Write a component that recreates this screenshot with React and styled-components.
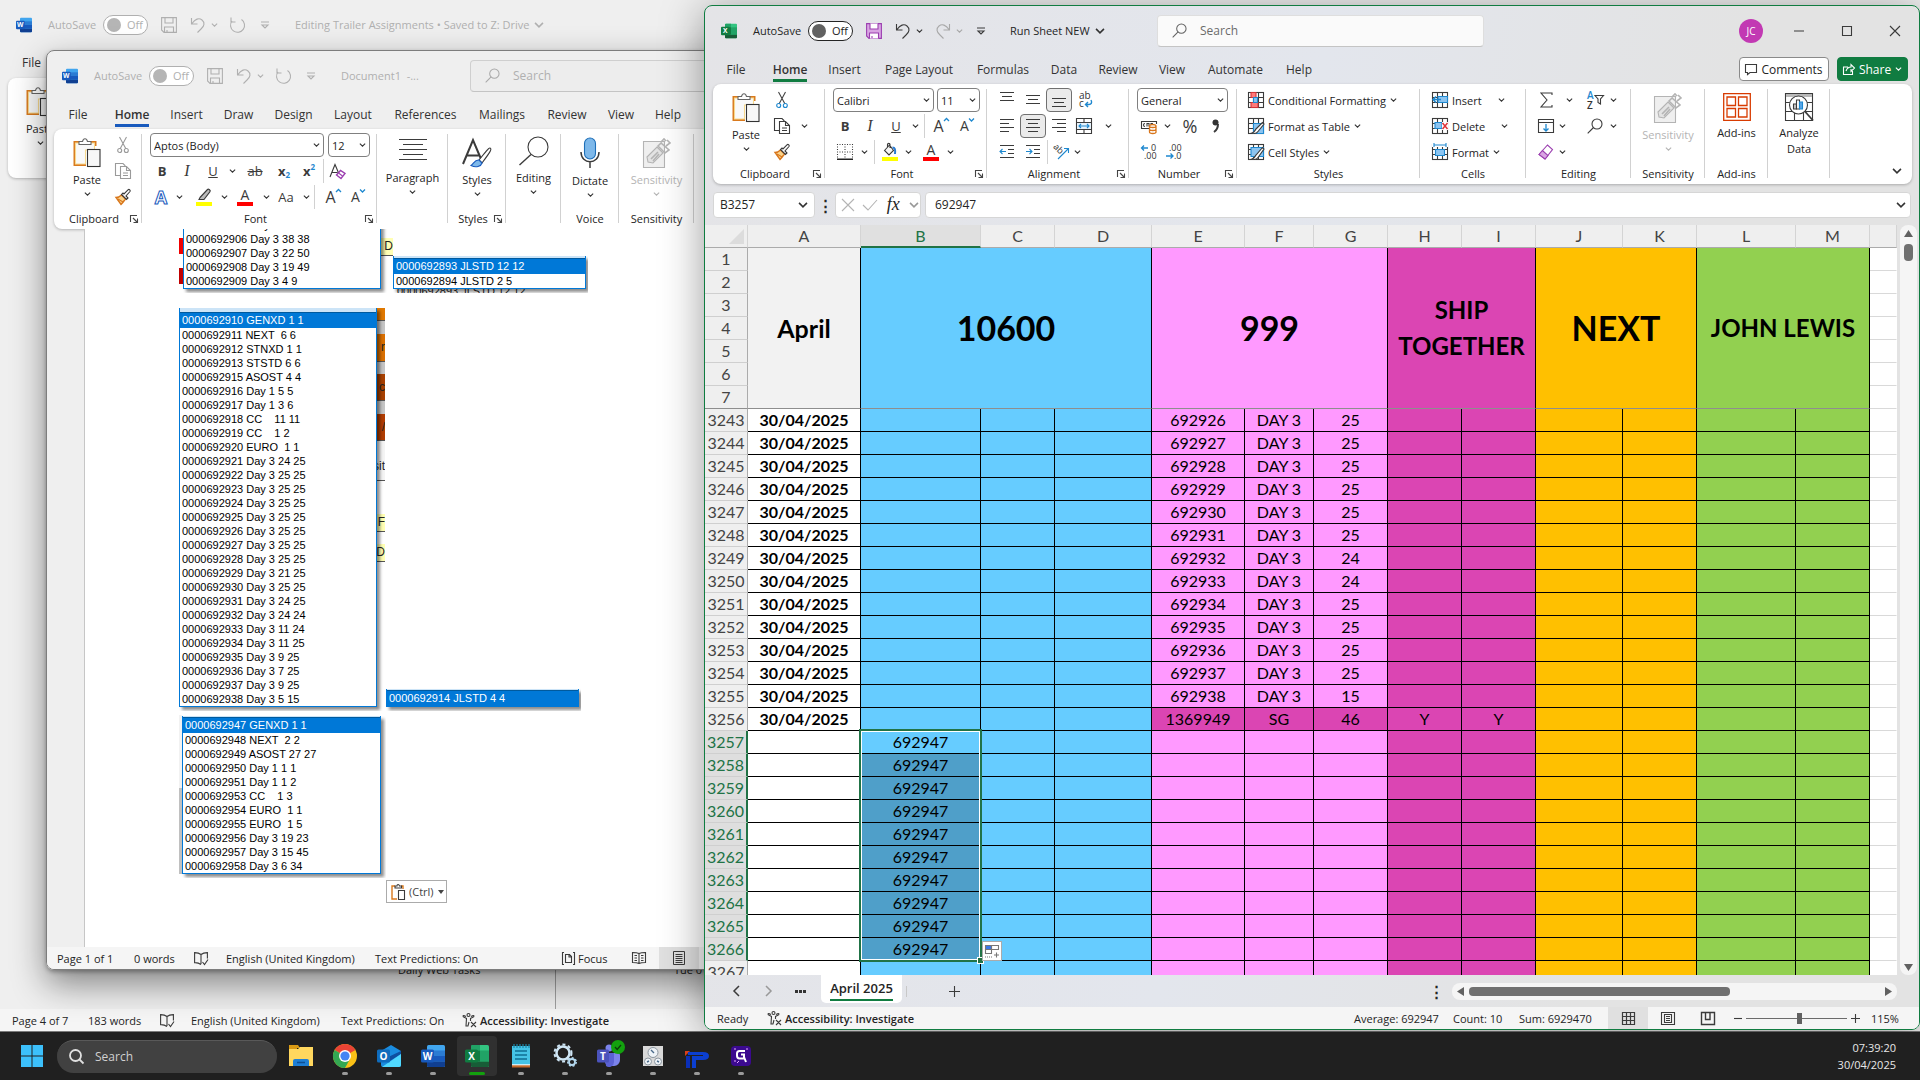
import React, { useState } from 'react';
import styled, { createGlobalStyle, css } from 'styled-components';

const GlobalStyle = createGlobalStyle`
  * {
    box-sizing: border-box;
  }

  body {
    margin: 0;
    font-family: 'Open Sans', 'Noto Sans', sans-serif;
    font-size: 11px;
    color: #242424;
    background: #202020;
    overflow: hidden;
  }

  button,
  input,
  select {
    font: inherit;
    color: inherit;
    margin: 0;
    padding: 0;
    border: 0;
    background: none;
    outline: none;
  }

  svg {
    display: block;
    flex-shrink: 0;
    overflow: visible;
  }
`;

/* ---------- icons ---------- */

const blue = '#1e88cf';

const Svg = ({ w = 16, h = 16, box, color = '#3b3b3b', children }) => (
  <svg
    width={w}
    height={h}
    viewBox={box || `0 0 ${w} ${h}`}
    fill="none"
    stroke={color}
    strokeWidth="1.1"
    aria-hidden="true"
  >
    {children}
  </svg>
);

const Chevron = ({ color = '#333', w = 7 }) => (
  <Svg w={w} h={w === 7 ? 4 : 6} box="0 0 8 5" color={color}>
    <path d="M.7.7 4 4 7.3.7" strokeWidth="1.3" />
  </Svg>
);

const OfficeLogo = ({ letter, size = 16, tones, split }) => (
  <Svg w={size} h={size} box="0 0 24 24">
    <g stroke="none">
      <rect x="6" y="1" width="18" height="22" rx="1.5" fill={tones[0]} />
      <rect x="6" y="6.5" width="18" height="5.5" fill={tones[1]} />
      <rect x="6" y="12" width="18" height="5.5" fill={tones[2]} />
      <path d="M6 17.500h18V21.500a1.500 1.500 0 0 1-1.500 1.500H7.500A1.500 1.500 0 0 1 6 21.500z" fill={tones[3]} />
      {split && <path d="M15 1H7.500Q6 1 6 2.500v4h9zM15 12v5.500h9V12z" fill={tones[1]} />}
      {split && <path d="M6 6.500h9V12H6z" fill={tones[2]} />}
      <rect x="0" y="5.500" width="13" height="13" rx="1.500" fill={tones[4]} />
      <text
        x="6.500"
        y="15.600"
        fontSize="10"
        fontWeight="700"
        textAnchor="middle"
        fill="#fff"
      >
        {letter}
      </text>
    </g>
  </Svg>
);

const WordLogo = ({ size }) => (
  <OfficeLogo letter="W" size={size} tones={['#41a5ee', '#2b7cd3', '#185abd', '#103f91', '#185abd']} />
);

const ExcelLogo = ({ size }) => (
  <OfficeLogo letter="X" size={size} split tones={['#33c481', '#21a366', '#107c41', '#185c37', '#107c41']} />
);

const Lines = ({ rows, y = 0, gap = 4 }) => (
  <path d={rows.map(([x1, x2], i) => `M${x1} ${y + i * gap + 0.5}H${x2}`).join('')} />
);

const Table16 = ({ children }) => (
  <Svg>
    <rect x=".5" y=".5" width="15" height="15" fill="#fff" />
    <path d="M.5 5.500h15M.5 10.500h15M5.500.5v15M10.500.5v15" />
    {children}
  </Svg>
);

const icons = {
  save: ({ color, fill = 'none' }) => (
    <Svg color={color}>
      <path d="M.6.6h14.800v14.800H3L.6 13z" fill={fill} />
      <path d="M4 .6v5.400h8V.6M3.500 15.400V10h9v5.400M6 13v2" fill={fill === 'none' ? 'none' : '#fff'} />
    </Svg>
  ),
  undo: ({ color }) => (
    <Svg color={color}>
      <path d="M1.500 1v6h6M2 6.500C5 2 9 .5 12 3s2.500 6-1 9l-3.500 3.500" />
    </Svg>
  ),
  redo: ({ color }) => (
    <Svg color={color}>
      <path d="M14.500 1v6h-6M14 6.500C11 2 7 .5 4 3s-2.500 6 1 9l3.500 3.500" />
    </Svg>
  ),
  repeat: ({ color }) => (
    <Svg color={color}>
      <path d="M2 .5v4.500h4.500M12.500 2.500A7 7 0 1 1 3 4" />
    </Svg>
  ),
  customise: ({ color }) => (
    <Svg w={8} h={8} color={color}>
      <path d="M0 1h8M1 4l3 3 3-3z" />
    </Svg>
  ),
  search: ({ color, w = 15 }) => (
    <Svg w={w} h={w} box="0 0 16 16" color={color}>
      <circle cx="10" cy="6" r="5" />
      <path d="M6.500 9.500.7 15.300" />
    </Svg>
  ),
  paste: () => (
    <Svg w={28} h={30}>
      <path d="M6 4H1.500v23H13M18 4h4.500v4" stroke="#d97a1e" strokeWidth="2" fill="#fbe3a8" />
      <path d="M2.500 5h19v7h-9v14h-10z" fill="#f9f9f9" stroke="#f7d98f" />
      <path d="M6 6.500V3.500h3.500C10 1.500 11 .7 12 .7s2 .8 2.500 2.800H18v3z" fill="#fff" stroke="#666" />
      <rect x="14.500" y="11.500" width="12.500" height="17" fill="#f7f7f7" stroke="#333" />
    </Svg>
  ),
  cut: ({ off }) => (
    <Svg w={12} h={16} color={off ? '#9a9a9a' : '#444'}>
      <path d="M2.500 0 9 12M9.500 0 3 12" />
      <circle cx="2.700" cy="13.500" r="2" stroke={off ? '#9a9a9a' : blue} />
      <circle cx="9.300" cy="13.500" r="2" stroke={off ? '#9a9a9a' : blue} />
    </Svg>
  ),
  copy: ({ off }) => (
    <Svg color={off ? '#9a9a9a' : '#3b3b3b'}>
      <path d="M5 12.500H.5V.5H8l2 2V4" />
      <path d="M5.500 3.500h6l4 4v8h-10zM11.500 3.500v4h4M8 10h5M8 12.500h5" fill="#fff" />
    </Svg>
  ),
  brush: () => (
    <Svg>
      <path d="M1 8.500c2 0 4-1 5.500-2.500L10.500 10C9 12 7.500 14 6 15.500z" fill="#fbd38a" stroke="#d8761c" strokeWidth="1.400" />
      <path d="m3 10 5 3" stroke="#d8761c" />
      <path d="m6.500 5.500 5 5 1.500-1.500-2-2 4-4.500c.8-1-.8-2.600-1.800-1.800L9 5 8 4z" fill="#fff" />
    </Svg>
  ),
  eraseA: () => (
    <Svg w={17} h={18}>
      <path d="M1 15 6 2.500 10 12M3 10.500h5.500" />
      <path d="m7.500 13 4-4.500 4.500 3-4 5z" fill="#fff" stroke="#9b3fb0" strokeWidth="1.400" />
      <path d="m9.500 11 4 3" stroke="#9b3fb0" />
    </Svg>
  ),
  pen: () => (
    <Svg w={16} h={18}>
      <path d="M4 9.500 11.500 1.500c1-1 3.500 1 2.500 2.200L8 11.500H3z" fill="#bbb" />
      <rect x="0" y="14" width="16" height="4" fill="#ffff00" stroke="none" />
    </Svg>
  ),
  bucket: () => (
    <Svg w={16} h={18}>
      <path d="m2.500 7.500 5-5.500 4 5.500-4.500 4.500zM5.500 4V1.500c0-1.500 2.500-1.500 2.500 0V5" fill="#f4f4f4" />
      <path d="M10.500 4.500c2.500 0 3 2 2.500 6.500" stroke="#2b7cd3" strokeWidth="2" />
      <rect x="0" y="14" width="16" height="4" fill="#ffff00" stroke="none" />
    </Svg>
  ),
  border: () => (
    <Svg>
      <path d="M.5 0v15M8 0v15M15.500 0v15M0 .5h16M0 8h16" strokeDasharray="1 1.500" />
      <path d="M0 15.300h16" strokeWidth="1.600" stroke="#222" />
    </Svg>
  ),
  paragraph: () => (
    <Svg w={28} h={28}>
      <Lines rows={[[0, 28], [4, 24], [0, 28], [4, 24], [0, 28]]} gap={5} y={1} />
    </Svg>
  ),
  alignTop: () => (
    <Svg>
      <Lines rows={[[1, 15], [3, 13], [1, 15]]} y={0} gap={4} />
    </Svg>
  ),
  alignMiddle: () => (
    <Svg>
      <Lines rows={[[1, 15], [3, 13], [1, 15]]} y={3} gap={4} />
    </Svg>
  ),
  alignBottom: () => (
    <Svg>
      <Lines rows={[[1, 15], [3, 13], [1, 15]]} y={6} gap={4} />
    </Svg>
  ),
  left: () => (
    <Svg>
      <Lines rows={[[1, 15], [1, 10], [1, 15], [1, 10]]} y={1} />
    </Svg>
  ),
  center: () => (
    <Svg>
      <Lines rows={[[1, 15], [3, 13], [1, 15], [3, 13]]} y={1} />
    </Svg>
  ),
  right: () => (
    <Svg>
      <Lines rows={[[1, 15], [6, 15], [1, 15], [6, 15]]} y={1} />
    </Svg>
  ),
  outdent: () => (
    <Svg>
      <path d="M1 1.500h14M9 5.500h6M9 9.500h6M1 13.500h14" />
      <path d="M7 7.500H1M3.500 5 1 7.500 3.500 10" stroke={blue} />
    </Svg>
  ),
  indent: () => (
    <Svg>
      <path d="M1 1.500h14M9 5.500h6M9 9.500h6M1 13.500h14" />
      <path d="M1 7.500h6M4.500 5 7 7.500 4.500 10" stroke={blue} />
    </Svg>
  ),
  wrap: () => (
    <Svg>
      <text x="1" y="7" fontSize="10" fill="#333" stroke="none">ab</text>
      <text x="1" y="15" fontSize="10" fill="#333" stroke="none">c</text>
      <path d="M13 8c1.500 3 0 4.500-2 4.500H7.500M10 10l-2.500 2.500L10 15" stroke={blue} strokeWidth="1.400" />
    </Svg>
  ),
  merge: () => (
    <Svg>
      <path d="M.5.5h15v15H.5zM.5 4.500h15M.5 11.500h15M8 .5v4M8 11.500v4" />
      <path d="M1 5h14v6H1z" fill="#e6f2fb" stroke="none" />
      <path d="M3 8h10M5 6 3 8l2 2M11 6l2 2-2 2" stroke={blue} />
    </Svg>
  ),
  orient: () => (
    <Svg>
      <text x="-1" y="7" fontSize="9" fill="#333" stroke="none" transform="rotate(45 4 6)">ab</text>
      <path d="M5 15 15 5M11 4.500h4.500V9" stroke={blue} />
    </Svg>
  ),
  money: () => (
    <Svg>
      <path d="M8 10.500H.5v-7h15V6M4 5.500c-2 0-2 3 0 3M6 8.500v-3h2v3M12 5.500h-2v1" />
      <path d="M8.500 8v6c0 2 6.500 2 6.500 0V8c0-2-6.500-2-6.500 0s6.500 2 6.500 0M8.500 11c0 2 6.500 2 6.500 0" fill="#fff" stroke="#d8761c" strokeWidth="1.300" />
    </Svg>
  ),
  decInc: () => (
    <Svg>
      <text x="10" y="7" fontSize="9" fill="#333" stroke="none">0</text>
      <text x="3" y="15" fontSize="9" fill="#333" stroke="none">.00</text>
      <path d="M7 4H.5M3 1.500.5 4 3 6.500" stroke={blue} strokeWidth="1.300" />
    </Svg>
  ),
  decDec: () => (
    <Svg>
      <text x="3" y="7" fontSize="9" fill="#333" stroke="none">.00</text>
      <text x="8" y="15" fontSize="9" fill="#333" stroke="none">.0</text>
      <path d="M0 12h7M4.500 9.500 7 12l-2.500 2.500" stroke={blue} strokeWidth="1.300" />
    </Svg>
  ),
  comma: () => (
    <Svg w={8} h={14}>
      <path d="M2 13c3-2 4-4 4-8" strokeWidth="2" />
      <circle cx="3.500" cy="3.500" r="3" fill="#333" stroke="none" />
    </Svg>
  ),
  conditional: () => (
    <Table16>
      <path d="M3 .5h5v5H3zM3 10.500h7v5H3z" fill="#ff7a7a" stroke="#d13438" />
      <path d="M5.500 5.500h4v5h-4z" fill="#8cc4f0" stroke={blue} />
    </Table16>
  ),
  tableFormat: () => (
    <Table16>
      <path d="M5.500 5.500h10v10h-10z" fill="#8cc4f0" stroke={blue} />
      <path d="M14.500 4.500 8 11c-1 1-1 3-4 4 3 1 5 0 6-1.500l6-7.500z" fill="#fff" />
    </Table16>
  ),
  cellStyle: () => (
    <Table16>
      <path d="M3 3.500h12.500v9H3z" fill="#8cc4f0" stroke={blue} />
      <path d="M14.500 3.500 8 11c-1 1-1 3-4 4 3 1 5 0 6-1.500l6-8.500z" fill="#fff" />
    </Table16>
  ),
  insertCell: () => (
    <Table16>
      <path d="M6 4.500h9.500v6H6z" fill="#8cc4f0" stroke={blue} />
      <path d="M9 7.500H1M4 4.500l-3 3 3 3" stroke={blue} strokeWidth="1.500" />
    </Table16>
  ),
  deleteCell: () => (
    <Table16>
      <path d="M3 4.500h7v6H3z" fill="#8cc4f0" stroke={blue} />
      <path d="M10 4h6v8h-6z" fill="#fff" stroke="none" />
      <path d="m10.500 5 5 6M15.500 5l-5 6" stroke="#e0353a" strokeWidth="1.500" />
    </Table16>
  ),
  formatCell: () => (
    <Table16>
      <path d="M0-1h16v4H0z" fill="#fff" stroke="none" />
      <path d="M2 1h12M2-1v4M14-1v4" stroke={blue} />
      <path d="M3.500 5.500h9v6h-9z" fill="#8cc4f0" stroke={blue} />
    </Table16>
  ),
  sum: () => (
    <Svg w={13} h={16}>
      <path d="M12 3V1H1l6 7-6 7h11v-2" />
    </Svg>
  ),
  sort: () => (
    <Svg w={17} h={18}>
      <text x="0" y="8" fontSize="10" fontWeight="600" fill={blue} stroke="none">A</text>
      <text x="0" y="18" fontSize="10" fontWeight="600" fill="#333" stroke="none">Z</text>
      <path d="M8 4.500h8.500L13.500 8v5L11 11.500V8z" />
    </Svg>
  ),
  fill: () => (
    <Svg>
      <path d="M.5 1.500h15v13H.5zM.5 4.500h15" />
      <path d="M8 6v7M5.500 10.500 8 13l2.500-2.500" stroke={blue} strokeWidth="1.300" />
    </Svg>
  ),
  eraser: () => (
    <Svg>
      <path d="M1 10.500 9.500 1l5 4.500L7 15z" fill="#fff" stroke="#9b3fb0" />
      <path d="M1 10.500 4.500 6.500l5.500 5L7 15z" fill="#d9a5e3" stroke="#9b3fb0" />
    </Svg>
  ),
  styles: () => (
    <Svg w={30} h={30}>
      <path d="M1 26 11 2l8 19M5 17.500h12" strokeWidth="2" />
      <path d="M28 10c2 1 1 3-8 15l-3-3C25 12 27 9.500 28 10z" fill="#fff" />
      <path d="M17 22c-4-.5-5 3-8 5.500 5 2.500 10 1 11-2.500z" fill="#7db8ea" stroke="#185abd" />
    </Svg>
  ),
  find: () => (
    <Svg w={30} h={28}>
      <circle cx="19" cy="9" r="10" />
      <path d="M12 16.500.5 27" strokeWidth="1.400" />
    </Svg>
  ),
  mic: () => (
    <Svg w={20} h={31}>
      <rect x="4.500" y="0" width="11" height="21" rx="5.500" fill="#7db8ea" stroke="#1e6fb8" />
      <path d="M1 14c0 13 18 13 18 0M10 24v6" strokeWidth="1.500" />
    </Svg>
  ),
  sensitivity: () => (
    <Svg w={28} h={30} color="#b4b4b4">
      <path d="M.5 3.500h21v26H.5z" fill="#efefef" />
      <path d="m4 19 10-10 6 6-10 10-5-1z" fill="#e3e3e3" />
      <path d="m8 21 7-7M10 23l6-7M15 8l3-3 8 7-4 3zM18 4l3-3 2 2M23 8l4-3-3-3" strokeWidth="1.600" />
    </Svg>
  ),
  addins: () => (
    <Svg w={28} h={28} color="#d83b01">
      <path d="M.7.7h26.600v26.600H.7zM4 4h8.500v8.500H4zM15.500 4H24v8.500h-8.500zM4 15.500h8.500V24H4zM15.500 15.500H24V24h-8.500z" strokeWidth="1.300" />
    </Svg>
  ),
  analyze: () => (
    <Svg w={28} h={28}>
      <path d="M.5.5h27v27H.5zM.5 9.500h27M.5 18.500h27M9.500 4v23.500M18.500 4v23.500" />
      <path d="M1 1h26v3H1z" fill="#b9b9b9" stroke="none" />
      <circle cx="13.500" cy="12" r="9" fill="#fff" />
      <path d="m20 18.500 8 9" strokeWidth="1.800" />
      <path d="M8.500 16v-5h3v5z" fill="#ccc" />
      <path d="M11.500 16V7h3v9z" fill="#fff" />
      <path d="M14.500 16V9h3v7z" fill="#5ba7e8" stroke={blue} />
    </Svg>
  ),
  caretUp: () => (
    <Svg w={5} h={12} color={blue}>
      <path d="M0 3 2.500.5 5 3" strokeWidth="1.300" />
    </Svg>
  ),
  caretDown: () => (
    <Svg w={5} h={12} color={blue}>
      <path d="M0 .5 2.500 3 5 .5" strokeWidth="1.300" />
    </Svg>
  ),
  launcher: () => (
    <Svg w={8} h={8} color="#444">
      <path d="M.5 7V.5H7M3 3l4 4M7.500 3.500v4h-4" />
    </Svg>
  ),
  proof: () => (
    <Svg w={14} h={13}>
      <path d="M7 2.500V12M7 2.500C5 .8 3 .6.600.6v10C3 10.500 5 11 7 12.500M7 2.500C9 .8 11 .6 13.400.6v6M8.500 10l2 2.500 3.500-5" />
    </Svg>
  ),
  access: () => (
    <Svg w={15} h={14}>
      <circle cx="6.500" cy="2" r="1.500" />
      <path d="M1 3.500c2 1.500 3 1.500 3.500 2L4 13h2l1-4M12 3.500C10 5 9 5 8.500 5.500V8M9 9l5 5M14 9l-5 5M1 3.500c0-2 2-.5 3 0M12 3.500c0-2-2-.5-3 0" />
    </Svg>
  ),
  focus: () => (
    <Svg w={13} h={13}>
      <path d="M2 .5H.5v12H2M11 .5h1.500v12H11M3.500 2.500h4l2 2v6h-6zM7 2.500v2.500h2.500" />
    </Svg>
  ),
  read: () => (
    <Svg w={14} h={12}>
      <path d="M7 1.500V11M7 1.500C5 .5 3 .5.500.5v10c2.500 0 4.500 0 6.500 1 2-1 4-1 6.500-1V.5C11 .5 9 .5 7 1.500M2.500 3.500H5M2.500 6H5M2.500 8.500H5M9 3.500h2.500M9 6h2.500M9 8.500h2.500" />
    </Svg>
  ),
  print: () => (
    <Svg w={12} h={14}>
      <path d="M.5.5h11v13H.5zM2.500 3.500h7M2.500 5.500h7M2.500 7.500h7M2.500 9.500h7M2.500 11.500h7" strokeWidth="1" />
    </Svg>
  ),
  gridView: () => (
    <Svg w={13} h={13}>
      <path d="M.5.5h12v12H.5zM.5 4.500h12M.5 8.500h12M4.500.5v12M8.500.5v12" strokeWidth="1.200" />
    </Svg>
  ),
  pageView: () => (
    <Svg w={14} h={13}>
      <path d="M.5.5h13v12h-13zM3.500 2.500h7v8h-7zM5 4.500h4M5 6.500h4M5 8.500h4" />
    </Svg>
  ),
  breakView: () => (
    <Svg w={14} h={13}>
      <path d="M.5.5h13v12h-13zM4.500.5v7h4.500v-7" strokeWidth="1.400" />
    </Svg>
  ),
};

const Ico = ({ name, ...rest }) => {
  const Drawing = icons[name];
  return <Drawing {...rest} />;
};

/* ---------- shared window parts ---------- */

const Desktop = styled.div`
  position: relative;
  height: 100vh;
  display: flex;
  flex-direction: column;
  overflow: hidden;
`;

const BackWindow = styled.section`
  flex: 1;
  display: flex;
  flex-direction: column;
  background: #efefef;
  border-bottom: 1px solid #7a7a7a;
`;

const WordWindow = styled.section`
  position: absolute;
  left: 46px;
  top: 50px;
  right: 60%;
  bottom: 110px;
  display: flex;
  flex-direction: column;
  overflow: hidden;
  background: #efefef;
  border: 1px solid #7d7d7d;
  border-radius: 8px;
`;

const WordShadow = styled.div`
  position: absolute;
  left: 46px;
  top: 50px;
  right: 60%;
  bottom: 110px;
  border-radius: 8px;
  box-shadow: 0 2px 4px rgba(0, 0, 0, 0.3), 0 14px 34px rgba(0, 0, 0, 0.45);
`;

const ExcelWindow = styled.section`
  position: absolute;
  left: 704px;
  top: 5px;
  right: 0;
  bottom: 50px;
  display: flex;
  flex-direction: column;
  overflow: hidden;
  background: linear-gradient(100deg, #e4e4e7, #e3e6ed 45%, #e3e3e3 75%);
  border: 1px solid #107c41;
  border-radius: 8px;
`;

const ExcelShadow = styled(WordShadow)`
  left: 704px;
  top: 5px;
  right: 0;
  bottom: 50px;
  box-shadow: 0 6px 44px rgba(0, 0, 0, 0.4);
`;

const TitleBar = styled.header`
  display: flex;
  align-items: center;
  height: ${(p) => p.$h}px;
  padding-left: ${(p) => p.$pad || 15}px;
  padding-right: 14px;
  color: ${(p) => (p.$dim ? '#b0b0b0' : '#242424')};
`;

const AutoSave = styled.label`
  display: flex;
  align-items: center;
  justify-content: space-between;
  flex-shrink: 0;
  width: 100px;
  margin: 0 13px 0 16px;
`;

const Track = styled.span`
  display: flex;
  align-items: center;
  gap: 6px;
  width: 45px;
  height: 20px;
  padding: 0 3px;
  border: 1px solid currentColor;
  border-radius: 10px;
  background: #fff;
`;

const Knob = styled.input`
  appearance: none;
  width: 14px;
  height: 14px;
  border-radius: 7px;
  background: ${(p) => (p.$dim ? '#b5b5b5' : '#616161')};
`;

const QuickTool = styled.button`
  display: flex;
  align-items: center;
  justify-content: center;
  flex-shrink: 0;
  width: ${(p) => p.$w}px;
  height: 24px;
  margin-left: ${(p) => p.$ml || 0}px;
`;

const DocTitle = styled.h1`
  display: flex;
  align-items: center;
  flex-shrink: 0;
  gap: 5px;
  margin: 0 0 0 ${(p) => p.$ml}px;
  width: ${(p) => p.$w}px;
  font-size: 11px;
  font-weight: 400;
  white-space: nowrap;
`;

const SearchBox = styled.label`
  display: flex;
  align-items: center;
  flex-shrink: 0;
  gap: 13px;
  width: 327px;
  height: 32px;
  padding-left: 14px;
  font-size: 12px;
  border: 1px solid ${(p) => (p.$dim ? '#cfcfcf' : '#dedede')};
  border-bottom-color: #c4c4c4;
  border-radius: 4px;
  background: ${(p) => (p.$dim ? '#ededed' : '#fafafa')};

  input {
    width: 200px;
  }

  input::placeholder {
    color: ${(p) => (p.$dim ? '#b0b0b0' : '#6b6b6b')};
    opacity: 1;
  }
`;

const TabBar = styled.nav`
  display: flex;
  align-items: center;
  flex-shrink: 0;
  height: 29px;
  padding-left: 7px;
  padding-right: 11px;
  font-size: 12px;
`;

const Tab = styled.a`
  display: flex;
  justify-content: center;
  flex-shrink: 0;
  width: ${(p) => p.$w}px;
  color: #333;
  text-decoration: none;
  white-space: nowrap;

  span {
    line-height: 18px;
    border-bottom: 3px solid transparent;
    padding-top: 3px;
  }

  ${(p) =>
    p.$accent &&
    css`
      font-weight: 600;

      span {
        border-bottom-color: ${p.$accent};
      }
    `}
`;

const Ribbon = styled.div`
  display: flex;
  flex-shrink: 0;
  height: 100px;
  margin: 0 7px 0 ${(p) => p.$ml || 7}px;
  padding-top: 3px;
  background: #fff;
  border-radius: 8px;
  box-shadow: 0 1px 3px rgba(0, 0, 0, 0.25);
  overflow: hidden;
`;

const GroupBox = styled.div`
  display: flex;
  flex-direction: column;
  flex-shrink: 0;
  width: ${(p) => p.$w}px;
  position: relative;

  &::after {
    content: '';
    position: absolute;
    right: 0;
    top: 2px;
    bottom: 6px;
    border-right: 1px solid #d1d1d1;
  }
`;

const GroupBody = styled.div`
  display: flex;
  height: 78px;
  padding-left: ${(p) => p.$pad}px;
  justify-content: ${(p) => (p.$pad ? 'flex-start' : 'center')};
`;

const GroupFoot = styled.div`
  display: flex;
  align-items: center;
  height: 17px;
  padding-right: 4px;

  span {
    flex: 1;
    text-align: center;
    padding-left: 4px;
    white-space: nowrap;
  }
`;

const Group = ({ w, pad, label, launcher, children }) => (
  <GroupBox $w={w}>
    <GroupBody $pad={pad}>{children}</GroupBody>
    <GroupFoot>
      <span>{label}</span>
      {launcher && <Ico name="launcher" />}
    </GroupFoot>
  </GroupBox>
);

const ToolColumn = styled.div`
  display: flex;
  flex-direction: column;
`;

const ToolRow = styled.div`
  display: flex;
  align-items: center;
  height: 26px;
  gap: ${(p) => p.$gap || 0}px;
`;

const Tool = styled.button`
  display: flex;
  align-items: center;
  justify-content: center;
  flex-shrink: 0;
  width: ${(p) => p.$w}px;
  height: 24px;
  margin-left: ${(p) => p.$ml || 0}px;

  ${(p) =>
    p.$on &&
    css`
      background: #ebebeb;
      border: 1px solid #707070;
      border-radius: 4px;
    `}
`;

const Rule = styled.i`
  height: 24px;
  width: 1px;
  margin: 0 ${(p) => p.$m}px;
  background: #d1d1d1;
`;

const BigTool = styled.button`
  display: flex;
  flex-direction: column;
  align-items: center;
  width: ${(p) => p.$w || 60}px;
  padding-top: 6px;
  line-height: 16px;
  color: ${(p) => (p.$off ? '#b4b4b4' : '#242424')};

  span {
    margin: 4px 0;
  }
`;

const LabelTool = styled.button`
  display: flex;
  align-items: center;
  gap: 4px;
  height: 26px;
  white-space: nowrap;

  span {
    min-width: ${(p) => p.$min || 0}px;
    text-align: left;
  }
`;

const SelectBox = styled.span`
  display: flex;
  align-items: center;
  width: ${(p) => p.$w}px;
  height: 24px;
  padding: 0 3px;
  border: 1px solid #808080;
  border-radius: 4px;
  background: #fff;

  select {
    appearance: none;
    flex: 1;
    min-width: 0;
  }
`;

const Glyph = styled.span`
  display: flex;
  justify-content: center;
  font-size: ${(p) => p.$size || 13}px;
  line-height: 16px;
  font-weight: ${(p) => (p.$bold ? 700 : 400)};
  font-style: ${(p) => (p.$italic ? 'italic' : 'normal')};
  font-family: ${(p) => (p.$italic ? "'Liberation Serif', serif" : 'inherit')};
  text-decoration: ${(p) => p.$line || 'none'};
  color: #3b3b3b;

  sup,
  sub {
    font-size: 8px;
    line-height: 8px;
    color: ${blue};
  }

  sub {
    align-self: flex-end;
  }
`;

const Swatched = styled(Glyph)`
  width: 16px;
  border-bottom: 4px solid #ff0000;
  line-height: 14px;
`;

const OutlineA = styled(Glyph)`
  color: #fff;
  font-size: 18px;
  font-weight: 700;
  -webkit-text-stroke: 1px #185abd;
`;

const Drop = ({ w, color }) => (
  <Tool $w={w} aria-label="More options">
    <Chevron color={color} />
  </Tool>
);

const Picker = ({ w, value, label }) => (
  <SelectBox $w={w}>
    <select aria-label={label} defaultValue={value}>
      <option>{value}</option>
    </select>
    <Chevron />
  </SelectBox>
);

const Grow = () => (
  <Glyph $size={16}>
    A<Ico name="caretUp" />
  </Glyph>
);

const Shrink = () => (
  <Glyph $size={14}>
    A<Ico name="caretDown" />
  </Glyph>
);

const AutoSaveToggle = ({ dim }) => {
  const [on, setOn] = useState(false);
  return (
    <AutoSave>
      AutoSave
      <Track>
        <Knob type="checkbox" $dim={dim} checked={on} onChange={() => setOn(!on)} />
        Off
      </Track>
    </AutoSave>
  );
};

const WordQuickTools = () => (
  <>
    <WordLogo />
    <AutoSaveToggle dim />
    <QuickTool $w={16} aria-label="Save"><Ico name="save" color="#b0b0b0" /></QuickTool>
    <QuickTool $w={26} $ml={8} aria-label="Undo"><Ico name="undo" color="#b0b0b0" /></QuickTool>
    <QuickTool $w={6} aria-label="Undo list"><Chevron color="#b0b0b0" /></QuickTool>
    <QuickTool $w={40} aria-label="Repeat"><Ico name="repeat" color="#b0b0b0" /></QuickTool>
    <QuickTool $w={16} aria-label="Customise"><Ico name="customise" color="#b0b0b0" /></QuickTool>
  </>
);

const ClipboardGroup = ({ w, off }) => (
  <Group w={w} pad={5} label="Clipboard" launcher>
    <BigTool $w={56}>
      <Ico name="paste" />
      <span>Paste</span>
      <Chevron />
    </BigTool>
    <ToolColumn>
      <ToolRow><Tool $w={16} aria-label="Cut"><Ico name="cut" off={off} /></Tool></ToolRow>
      <ToolRow>
        <Tool $w={16} aria-label="Copy"><Ico name="copy" off={off} /></Tool>
        {!off && <Drop w={28} />}
      </ToolRow>
      <ToolRow><Tool $w={16} aria-label="Format Painter"><Ico name="brush" /></Tool></ToolRow>
    </ToolColumn>
  </Group>
);

/* ---------- Word ---------- */

const StatusBar = styled.footer`
  display: flex;
  align-items: center;
  flex-shrink: 0;
  height: 22px;
  padding-left: ${(p) => p.$pad}px;
  background: #f5f5f5;
  white-space: nowrap;
`;

const StatusItem = styled.span`
  display: flex;
  align-items: center;
  gap: 3px;
  flex-shrink: 0;
  width: ${(p) => p.$w}px;
  height: 22px;
  font-weight: ${(p) => (p.$bold ? 600 : 400)};
`;

const ViewButton = styled.button`
  display: flex;
  align-items: center;
  justify-content: center;
  width: 40px;
  height: 22px;
  background: ${(p) => (p.$on ? '#e0e0e0' : 'none')};
`;

const DocArea = styled.main`
  flex: 1;
  min-height: 0;
  display: flex;
  overflow: hidden;
  padding-left: 37px;
`;

const Page = styled.article`
  flex: 1;
  background: #fff;
  border-left: 1px solid #c6c6c6;
  padding-left: 94px;
`;

const PicRow = styled.div`
  display: flex;
  align-items: flex-end;
  height: ${(p) => p.$h}px;
  margin-top: ${(p) => p.$mt || 0}px;
`;

const Pic = styled.figure`
  display: flex;
  align-items: flex-end;
  flex-shrink: 0;
  width: ${(p) => p.$w}px;
  height: ${(p) => (p.$h ? `${p.$h}px` : '100%')};
  margin: 0;
  overflow: hidden;
`;

const ListPane = styled.div`
  display: flex;
  flex-direction: column;
  justify-content: flex-end;
  flex-shrink: 0;
  width: ${(p) => p.$w}px;
  margin-bottom: ${(p) => (p.$flush ? 0 : 4)}px;
  border: 1px solid #0078d7;
  border-top: 0;
  background: #fff;
  box-shadow: 3px 3px 3px rgba(0, 0, 0, 0.45);
  position: relative;
`;

const ListTop = styled.div`
  height: ${(p) => p.$h}px;
  background: #cce4f7;
  border-bottom: 1px solid #005a9e;
`;

const ListRow = styled.div`
  flex-shrink: 0;
  height: ${(p) => (p.$on ? 15 : 14)}px;
  padding-left: 2px;
  line-height: ${(p) => (p.$on ? 15 : 14)}px;
  font-family: 'Liberation Sans', Arial, sans-serif;
  font-size: 11px;
  white-space: pre;
  color: ${(p) => (p.$on ? '#fff' : '#000')};
  background: ${(p) => (p.$on ? '#0078d7' : '#fff')};
`;

const Slivers = styled.div`
  display: flex;
  flex-direction: column;
  align-self: flex-start;
  flex-shrink: 0;
  width: ${(p) => p.$w}px;
  font-family: 'Liberation Sans', Arial, sans-serif;
  font-size: 12px;
  overflow: hidden;
`;

const Sliver = styled.div`
  height: ${(p) => p.$h}px;
  line-height: ${(p) => p.$h}px;
  background: ${(p) => p.$bg || '#fff'};
  text-align: right;
  direction: ${(p) => (p.$clip ? 'rtl' : 'ltr')};
`;

const SelectEdge = styled.div`
  height: 4px;
  overflow: hidden;
  padding-left: 4px;
  line-height: 4px;
  font-family: 'Liberation Sans', Arial, sans-serif;
  font-size: 11px;
  background: #fff;
`;

const PicStack = styled.div`
  width: 100%;
`;

const CtrlButton = styled.button`
  display: flex;
  align-items: center;
  gap: 4px;
  width: 61px;
  height: 23px;
  margin: 2px 0 0 207px;
  padding-left: 4px;
  border: 1px solid #ababab;
  background: #fff;
  color: #444;
`;

const topRows = [
  '0000692905 Day 3 40 40',
  '0000692906 Day 3 38 38',
  '0000692907 Day 3 22 50',
  '0000692908 Day 3 19 49',
  '0000692909 Day 3 4 9',
];

const sideRows = ['0000692893 JLSTD 12 12', '0000692894 JLSTD 2 5'];

const middleRows = [
  '0000692910 GENXD 1 1',
  '0000692911 NEXT  6 6',
  '0000692912 STNXD 1 1',
  '0000692913 STSTD 6 6',
  '0000692915 ASOST 4 4',
  '0000692916 Day 1 5 5',
  '0000692917 Day 1 3 6',
  '0000692918 CC    11 11',
  '0000692919 CC    1 2',
  '0000692920 EURO  1 1',
  '0000692921 Day 3 24 25',
  '0000692922 Day 3 25 25',
  '0000692923 Day 3 25 25',
  '0000692924 Day 3 25 25',
  '0000692925 Day 3 25 25',
  '0000692926 Day 3 25 25',
  '0000692927 Day 3 25 25',
  '0000692928 Day 3 25 25',
  '0000692929 Day 3 21 25',
  '0000692930 Day 3 25 25',
  '0000692931 Day 3 24 25',
  '0000692932 Day 3 24 24',
  '0000692933 Day 3 11 24',
  '0000692934 Day 3 11 25',
  '0000692935 Day 3 9 25',
  '0000692936 Day 3 7 25',
  '0000692937 Day 3 9 25',
  '0000692938 Day 3 5 15',
];

const bottomRows = [
  '0000692947 GENXD 1 1',
  '0000692948 NEXT  2 2',
  '0000692949 ASOST 27 27',
  '0000692950 Day 1 1 1',
  '0000692951 Day 1 1 2',
  '0000692953 CC    1 3',
  '0000692954 EURO  1 1',
  '0000692955 EURO  1 5',
  '0000692956 Day 3 19 23',
  '0000692957 Day 3 15 45',
  '0000692958 Day 3 6 34',
];

const edgeSlivers = [
  [12, '#e07800'],
  [1, '#555'],
  [13, '#c4c4c4'],
  [27, '#d96f00', 'r'],
  [1, '#555'],
  [12, '#c4c4c4'],
  [26, '#a84000', 'c'],
  [1, '#555'],
  [13, '#c4c4c4'],
  [26, '#b03c00', '/'],
  [1, '#555'],
  [12, '#f4f4f4'],
  [27, '#f4f4f4', 'sit'],
  [1, '#555'],
  [33, '#fff'],
  [17, '#ffffb4', 'F'],
  [1, '#555'],
  [12, '#fff'],
  [17, '#ffffb4', 'D'],
  [1, '#555'],
];

const wordTabs = [
  ['File', 48],
  ['Home', 60],
  ['Insert', 49],
  ['Draw', 55],
  ['Design', 55],
  ['Layout', 64],
  ['References', 81],
  ['Mailings', 72],
  ['Review', 58],
  ['View', 50],
  ['Help', 44],
];

const PickList = ({ rows, w, top, selectFirst, flush }) => (
  <ListPane $w={w} $flush={flush}>
    {top && <ListTop $h={top} />}
    {rows.map((row, i) => (
      <ListRow key={row} $on={selectFirst && i === 0}>
        {row}
      </ListRow>
    ))}
  </ListPane>
);

function WordDocument() {
  return (
    <DocArea>
      <Page>
        <PicRow $h={64}>
          <Pic $w={214}>
            <Slivers $w={4}>
              <Sliver $h={9} />
              <Sliver $h={16} $bg="#f00000" />
              <Sliver $h={14} />
              <Sliver $h={16} $bg="#c00000" />
            </Slivers>
            <PickList rows={topRows} w={198} />
            <Slivers $w={12}>
              <Sliver $h={9} />
              <Sliver $h={17} $bg="#ffffb4">D</Sliver>
              <Sliver $h={1} $bg="#555" />
            </Slivers>
          </Pic>
          <Pic $w={195} $h={37}>
            <PicStack>
              <PickList rows={sideRows} w={193} top={3} selectFirst flush />
              <SelectEdge aria-hidden="true">0000692893 JLSTD 12 12</SelectEdge>
            </PicStack>
          </Pic>
        </PicRow>

        <PicRow $h={403} $mt={15}>
          <Pic $w={207}>
            <PickList rows={middleRows} w={198} top={5} selectFirst />
            <Slivers $w={8}>
              {edgeSlivers.map(([h, bg, text], i) => (
                <Sliver key={i} $h={h} $bg={bg} $clip>
                  {text}
                </Sliver>
              ))}
            </Slivers>
          </Pic>
          <Pic $w={195} $h={24}>
            <PickList rows={['0000692914 JLSTD 4 4']} w={193} top={2} selectFirst />
          </Pic>
        </PicRow>

        <PicRow $h={163} $mt={4}>
          <Pic $w={207}>
            <Slivers $w={3}>
              <Sliver $h={73} $bg="#f2f2f2" />
              <Sliver $h={86} $bg="#c0c0c0" />
            </Slivers>
            <PickList rows={bottomRows} w={199} top={2} selectFirst />
          </Pic>
        </PicRow>

        <CtrlButton>
          <Svg w={14} h={16}>
            <path d="M4 2H1v13h5M10 2h2v3" stroke="#d97a1e" strokeWidth="1.400" />
            <path d="M4 4V2h2C6 0 8 0 8.500 2h2v2z" fill="#fff" />
            <path d="M7.500 6.500h6v9h-6z" fill="#fff" />
          </Svg>
          (Ctrl)
          <Svg w={6} h={4}>
            <path d="M0 0h6L3 4z" fill="#444" stroke="none" />
          </Svg>
        </CtrlButton>
      </Page>
    </DocArea>
  );
}

function WordRibbon() {
  return (
    <Ribbon>
      <ClipboardGroup w={88} off />
      <Group w={235} pad={8} label="Font" launcher>
        <ToolColumn>
          <ToolRow $gap={4}>
            <Picker w={174} value="Aptos (Body)" label="Font" />
            <Picker w={42} value="12" label="Font size" />
          </ToolRow>
          <ToolRow>
            <Tool $w={24}><Glyph $bold>B</Glyph></Tool>
            <Tool $w={26}><Glyph $italic $size={16}>I</Glyph></Tool>
            <Tool $w={26}><Glyph $line="underline">U</Glyph></Tool>
            <Drop w={12} />
            <Tool $w={34}><Glyph $line="line-through">ab</Glyph></Tool>
            <Tool $w={24}><Glyph $bold>x<sub>2</sub></Glyph></Tool>
            <Tool $w={26}><Glyph $bold>x<sup>2</sup></Glyph></Tool>
            <Rule $m={1} />
            <Tool $w={24} aria-label="Clear formatting"><Ico name="eraseA" /></Tool>
          </ToolRow>
          <ToolRow>
            <Tool $w={22}><OutlineA>A</OutlineA></Tool>
            <Drop w={14} />
            <Tool $w={36} aria-label="Highlight"><Ico name="pen" /></Tool>
            <Drop w={4} />
            <Tool $w={38}><Swatched $size={14}>A</Swatched></Tool>
            <Drop w={4} />
            <Tool $w={36}><Glyph>Aa</Glyph></Tool>
            <Drop w={4} />
            <Rule $m={6} />
            <Tool $w={24}><Grow /></Tool>
            <Tool $w={26}><Shrink /></Tool>
          </ToolRow>
        </ToolColumn>
      </Group>
      <Group w={71} label="">
        <BigTool $w={70}>
          <Ico name="paragraph" />
          <span>Paragraph</span>
          <Chevron />
        </BigTool>
      </Group>
      <Group w={58} label="Styles" launcher>
        <BigTool $w={56}>
          <Ico name="styles" />
          <span>Styles</span>
          <Chevron />
        </BigTool>
      </Group>
      <Group w={55} label="">
        <BigTool $w={54}>
          <Ico name="find" />
          <span>Editing</span>
          <Chevron />
        </BigTool>
      </Group>
      <Group w={58} label="Voice">
        <BigTool $w={56}>
          <Ico name="mic" />
          <span>Dictate</span>
          <Chevron />
        </BigTool>
      </Group>
      <Group w={75} label="Sensitivity">
        <BigTool $w={70} $off>
          <Ico name="sensitivity" />
          <span>Sensitivity</span>
          <Chevron color="#b4b4b4" />
        </BigTool>
      </Group>
    </Ribbon>
  );
}

function Word() {
  return (
    <WordWindow>
      <TitleBar $h={49} $dim>
        <WordQuickTools />
        <DocTitle $ml={22} $w={129}>Document1 &nbsp;-...</DocTitle>
        <SearchBox $dim>
          <Ico name="search" color="#a8a8a8" />
          <input placeholder="Search" aria-label="Search" />
        </SearchBox>
      </TitleBar>
      <TabBar>
        {wordTabs.map(([name, w]) => (
          <Tab key={name} href="#" $w={w} $accent={name === 'Home' && '#185abd'}>
            <span>{name}</span>
          </Tab>
        ))}
      </TabBar>
      <WordRibbon />
      <WordDocument />
      <StatusBar $pad={10}>
        <StatusItem $w={77}>Page 1 of 1</StatusItem>
        <StatusItem $w={60}>0 words</StatusItem>
        <StatusItem $w={32}><Ico name="proof" /></StatusItem>
        <StatusItem $w={149}>English (United Kingdom)</StatusItem>
        <StatusItem $w={187}>Text Predictions: On</StatusItem>
        <StatusItem $w={57}><Ico name="focus" />Focus</StatusItem>
        <ViewButton aria-label="Read mode"><Ico name="read" /></ViewButton>
        <ViewButton $on aria-label="Print layout"><Ico name="print" /></ViewButton>
      </StatusBar>
    </WordWindow>
  );
}

const BackTab = styled.a`
  margin: 4px 0 5px 22px;
  font-size: 12px;
  line-height: 20px;
  color: #333;
  text-decoration: none;
`;

const BackRibbon = styled.div`
  height: 100px;
  margin-left: 8px;
  padding: 3px 0 0 3px;
  background: #fff;
  border-radius: 8px;
  box-shadow: 0 1px 3px rgba(0, 0, 0, 0.25);
`;

const BackDoc = styled.div`
  flex: 1;
  display: flex;
  align-items: flex-end;
  padding-left: 396px;
`;

const BackCell = styled.div`
  width: ${(p) => p.$w}px;
  height: 45px;
  border-right: ${(p) => (p.$line ? '1px solid #a0a0a0' : '0')};
  padding-left: 2px;
  line-height: 12px;
`;

function BackgroundWord() {
  return (
    <BackWindow>
      <TitleBar $h={49} $dim $pad={16}>
        <WordQuickTools />
        <DocTitle $ml={22} $w={280}>
          Editing Trailer Assignments • Saved to Z: Drive
          <Chevron color="#b0b0b0" w={10} />
        </DocTitle>
      </TitleBar>
      <BackTab href="#">File</BackTab>
      <BackRibbon>
        <BigTool $w={58}>
          <Ico name="paste" />
          <span>Paste</span>
          <Chevron />
        </BigTool>
      </BackRibbon>
      <BackDoc>
        <BackCell $w={160} $line>Daily Web Tasks</BackCell>
        <BackCell $w={116} />
        <BackCell $w={90}>Tue 01</BackCell>
      </BackDoc>
      <StatusBar $pad={12}>
        <StatusItem $w={76}>Page 4 of 7</StatusItem>
        <StatusItem $w={72}>183 words</StatusItem>
        <StatusItem $w={31}><Ico name="proof" /></StatusItem>
        <StatusItem $w={150}>English (United Kingdom)</StatusItem>
        <StatusItem $w={121}>Text Predictions: On</StatusItem>
        <StatusItem $w={160} $bold><Ico name="access" />Accessibility: Investigate</StatusItem>
      </StatusBar>
    </BackWindow>
  );
}

/* ---------- Excel ---------- */

const excelTabs = [
  ['File', 48],
  ['Home', 60],
  ['Insert', 49],
  ['Page Layout', 100],
  ['Formulas', 68],
  ['Data', 54],
  ['Review', 54],
  ['View', 54],
  ['Automate', 73],
  ['Help', 54],
];

const Spacer = styled.div`
  flex: 1;
`;

const Avatar = styled.span`
  width: 24px;
  height: 24px;
  margin-right: 12px;
  border-radius: 12px;
  background: #c239b3;
  color: #fff;
  font-size: 10px;
  line-height: 24px;
  text-align: center;
`;

const WindowButton = styled.button`
  display: flex;
  align-items: center;
  justify-content: center;
  width: 48px;
  height: 30px;
  margin-right: ${(p) => (p.$last ? '-14px' : '0')};
`;

const ActionButton = styled.button`
  display: flex;
  align-items: center;
  justify-content: center;
  gap: 4px;
  width: ${(p) => p.$w}px;
  height: 24px;
  margin: 0 0 1px 8px;
  border: 1px solid ${(p) => (p.$green ? '#107c41' : '#8a8a8a')};
  border-radius: 4px;
  background: ${(p) => (p.$green ? '#107c41' : '#fff')};
  color: ${(p) => (p.$green ? '#fff' : '#242424')};
`;

const CollapseButton = styled.button`
  margin: auto 10px 10px auto;
`;

const FormulaBar = styled.div`
  display: flex;
  align-items: center;
  height: 41px;
  padding: 0 8px;
  font-size: 12px;
`;

const NameBox = styled.div`
  display: flex;
  align-items: center;
  width: 102px;
  height: 26px;
  padding: 0 6px;
  border: 1px solid #d6d6d6;
  border-radius: 4px;
  background: #fff;

  input {
    flex: 1;
    min-width: 0;
  }
`;

const Dots = styled.span`
  width: 20px;
  margin-right: ${(p) => p.$mr || 0}px;
  text-align: center;
  font-size: 15px;
  font-weight: 700;
`;

const FxBox = styled.div`
  display: flex;
  align-items: center;
  justify-content: space-between;
  width: 86px;
  height: 26px;
  padding: 0 1px 0 6px;
  border: 1px solid #d6d6d6;
  border-radius: 4px;
  background: #fff;
  font: italic 400 18px 'Liberation Serif', serif;
`;

const FormulaBox = styled(NameBox)`
  flex: 1;
  margin-left: 4px;
  padding: 0 4px 0 9px;
`;

const SheetArea = styled.div`
  flex: 1;
  min-height: 0;
  display: flex;
`;

const GridView = styled.div`
  flex: 1;
  overflow: hidden;
  background: #fff;
`;

const Sheet = styled.table`
  table-layout: fixed;
  width: 100%;
  border-collapse: separate;
  border-spacing: 0;
  font-family: Lato, sans-serif;
  font-size: 16px;
  line-height: 20px;
  text-align: center;

  th,
  td {
    height: 23px;
    padding: 0;
    white-space: nowrap;
  }
`;

const ColHead = styled.th`
  font-weight: 400;
  color: ${(p) => (p.$on ? '#217346' : '#444')};
  background: ${(p) => (p.$on ? '#e0e0e0' : '#efefef')};
  border-right: 1px solid #d4d4d4;
  border-bottom: ${(p) => (p.$on ? '2px solid #217346' : '1px solid #ababab')};
`;

const RowHead = styled.th`
  font-weight: 400;
  color: ${(p) => (p.$on ? '#217346' : '#444')};
  background: ${(p) => (p.$on ? '#dedede' : '#efefef')};
  border-right: ${(p) => (p.$on ? '2px solid #217346' : '1px solid #ababab')};
  border-bottom: 1px solid ${(p) => (p.$edge ? '#8e8e8e' : '#cfcfcf')};
`;

const Banner = styled.td`
  font-size: ${(p) => p.$size}px;
  line-height: 36px;
  font-weight: 700;
  color: #000;
  background: ${(p) => p.$bg};
  border-right: 1px solid #000;
  border-bottom: 1px solid #8e8e8e;
  white-space: normal !important;
`;

const Cell = styled.td`
  position: relative;
  color: #000;
  font-weight: ${(p) => (p.$bold ? 700 : 400)};
  background: ${(p) => p.$bg};
  border-right: 1px solid ${(p) => (p.$plain ? '#fff' : '#000')};
  border-bottom: 1px solid ${(p) => (p.$plain ? '#d9d9d9' : '#000')};
`;

const Selection = styled.span`
  position: absolute;
  z-index: 1;
  left: -2px;
  right: -2px;
  top: -2px;
  height: 233px;
  border: 2px solid #217346;
  box-shadow: inset 0 0 0 1px #fff;
  pointer-events: none;
`;

const FillHandle = styled.span`
  position: absolute;
  right: -4px;
  bottom: -4px;
  width: 7px;
  height: 7px;
  border: 1px solid #fff;
  background: #217346;
`;

const FillOptions = styled.button`
  position: absolute;
  right: -22px;
  bottom: -1px;
  width: 20px;
  height: 20px;
  padding: 2px;
  border: 1px solid #ababab;
  background: #fff;
`;

const VScroll = styled.div`
  display: flex;
  flex-direction: column;
  align-items: center;
  width: 17px;
  margin: 0 2px 0 3px;
  padding: 5px 0 4px;
  border-radius: 8px;
  background: #f5f5f5;
`;

const VThumb = styled.div`
  width: 9px;
  height: 17px;
  margin-top: 7px;
  border-radius: 4px;
  background: #707070;
`;

const SheetBar = styled.div`
  display: flex;
  align-items: center;
  height: 32px;
  padding-right: 22px;
`;

const SheetNav = styled.button`
  display: flex;
  justify-content: center;
  width: 32px;
`;

const SheetTab = styled.button`
  align-self: flex-start;
  width: 81px;
  height: 28px;
  margin-left: 20px;
  border-radius: 0 0 5px 5px;
  background: #fff;
  font-size: 13px;
  font-weight: 600;

  span {
    display: inline-block;
    line-height: 21px;
    border-bottom: 2px solid #107c41;
    white-space: nowrap;
  }
`;

const AddSheet = styled.button`
  margin-left: 4px;
  padding-left: 42px;
  border-left: 1px solid #c8c8c8;
`;

const HScroll = styled.div`
  display: flex;
  align-items: center;
  width: 445px;
  height: 17px;
  padding: 0 5px;
  border-radius: 8px;
  background: #f5f5f5;
`;

const HThumb = styled.div`
  width: 261px;
  height: 9px;
  margin: 0 auto 0 5px;
  border-radius: 4px;
  background: #707070;
`;

const Zoom = styled.input`
  appearance: none;
  width: 101px;
  height: 14px;
  margin: 0 4px;
  background: linear-gradient(#6b6b6b, #6b6b6b) center / 100% 1px no-repeat;

  &::-webkit-slider-thumb {
    appearance: none;
    width: 5px;
    height: 11px;
    background: #616161;
  }
`;

const sky = '#66ccff';
const pink = '#ff99ff';
const magenta = '#db45b3';
const amber = '#ffc000';
const green = '#92d050';

const columns = [
  ['A', 113, '#fff'],
  ['B', 120, sky],
  ['C', 74, sky],
  ['D', 97, sky],
  ['E', 93, pink],
  ['F', 69, pink],
  ['G', 74, pink],
  ['H', 74, magenta],
  ['I', 74, magenta],
  ['J', 87, amber],
  ['K', 74, amber],
  ['L', 99, green],
  ['M', 74, green],
];

const cartons = [25, 25, 25, 25, 25, 25, 24, 24, 25, 25, 25, 25, 15];

const sheetRows = Array.from({ length: 25 }, (_, i) => {
  const number = 3243 + i;
  const values = {};
  if (number <= 3256) values.A = '30/04/2025';
  if (i < 13) {
    values.E = 692926 + i;
    values.F = 'DAY 3';
    values.G = cartons[i];
  }
  if (number === 3256) Object.assign(values, { E: 1369949, F: 'SG', G: 46, H: 'Y', I: 'Y' });
  if (number >= 3257 && number <= 3266) values.B = 692947;
  return { number, values };
});

const cellColour = (letter, base, number) => {
  if (letter === 'B' && number >= 3258 && number <= 3266) return '#4f9fc9';
  if (number === 3256 && 'EFG'.includes(letter)) return magenta;
  return base;
};

function SheetTable() {
  return (
    <Sheet>
      <colgroup>
        <col width="43" />
        {columns.map(([letter, w]) => (
          <col key={letter} width={w} />
        ))}
        <col />
      </colgroup>
      <thead>
        <tr>
          <ColHead aria-label="Select all">
            <Svg w={36} h={18}>
              <path d="M39 2v15H24z" fill="#dcdcdc" stroke="none" />
            </Svg>
          </ColHead>
          {columns.map(([letter]) => (
            <ColHead key={letter} $on={letter === 'B'}>{letter}</ColHead>
          ))}
          <ColHead />
        </tr>
      </thead>
      <tbody>
        {[1, 2, 3, 4, 5, 6, 7].map((n) => (
          <tr key={n}>
            <RowHead $edge={n === 7}>{n}</RowHead>
            {n === 1 && (
              <>
                <Banner rowSpan="7" $bg="#f2f2f2" $size={25}>April</Banner>
                <Banner rowSpan="7" colSpan="3" $bg={sky} $size={34}>10600</Banner>
                <Banner rowSpan="7" colSpan="3" $bg={pink} $size={34}>999</Banner>
                <Banner rowSpan="7" colSpan="2" $bg={magenta} $size={24}>SHIP TOGETHER</Banner>
                <Banner rowSpan="7" colSpan="2" $bg={amber} $size={34}>NEXT</Banner>
                <Banner rowSpan="7" colSpan="2" $bg={green} $size={24}>JOHN LEWIS</Banner>
              </>
            )}
            <Cell $plain />
          </tr>
        ))}
        {sheetRows.map(({ number, values }) => (
          <tr key={number}>
            <RowHead $on={number >= 3257 && number <= 3266}>{number}</RowHead>
            {columns.map(([letter, , base]) => (
              <Cell key={letter} $bg={cellColour(letter, base, number)} $bold={letter === 'A'}>
                {values[letter]}
                {letter === 'B' && number === 3257 && (
                  <Selection>
                    <FillHandle />
                    <FillOptions aria-label="Auto fill options">
                      <Svg w={14} h={14} color="#777">
                        <path d="M6.500 1.500h7v4h-7zM.5 5.500h6v4h-6z" />
                        <path d="M.5 1.500h6v4h-6z" fill="#3b78e7" />
                        <path d="M0 13h7" strokeDasharray="1 1" />
                        <path d="M9 11h5M11.500 8.500v5" />
                      </Svg>
                    </FillOptions>
                  </Selection>
                )}
              </Cell>
            ))}
            <Cell $plain />
          </tr>
        ))}
      </tbody>
    </Sheet>
  );
}

function ExcelRibbon() {
  return (
    <Ribbon $ml={8}>
      <ClipboardGroup w={112} />
      <Group w={162} pad={8} label="Font" launcher>
        <ToolColumn>
          <ToolRow $gap={3}>
            <Picker w={101} value="Calibri" label="Font" />
            <Picker w={43} value="11" label="Font size" />
          </ToolRow>
          <ToolRow>
            <Tool $w={24}><Glyph $bold>B</Glyph></Tool>
            <Tool $w={26}><Glyph $italic $size={16}>I</Glyph></Tool>
            <Tool $w={26}><Glyph $line="underline">U</Glyph></Tool>
            <Drop w={12} />
            <Rule $m={3} />
            <Tool $w={26}><Grow /></Tool>
            <Tool $w={26}><Shrink /></Tool>
          </ToolRow>
          <ToolRow>
            <Tool $w={24} aria-label="Borders"><Ico name="border" /></Tool>
            <Drop w={14} />
            <Rule $m={3} />
            <Tool $w={24} aria-label="Fill colour"><Ico name="bucket" /></Tool>
            <Drop w={12} />
            <Tool $w={34}><Swatched $size={14}>A</Swatched></Tool>
            <Drop w={4} />
          </ToolRow>
        </ToolColumn>
      </Group>
      <Group w={142} pad={7} label="Alignment" launcher>
        <ToolColumn>
          <ToolRow>
            <Tool $w={26} aria-label="Top align"><Ico name="alignTop" /></Tool>
            <Tool $w={26} aria-label="Middle align"><Ico name="alignMiddle" /></Tool>
            <Tool $w={26} $on aria-label="Bottom align"><Ico name="alignBottom" /></Tool>
            <Tool $w={28} aria-label="Wrap text"><Ico name="wrap" /></Tool>
          </ToolRow>
          <ToolRow>
            <Tool $w={26} aria-label="Align left"><Ico name="left" /></Tool>
            <Tool $w={26} $on aria-label="Centre"><Ico name="center" /></Tool>
            <Tool $w={26} aria-label="Align right"><Ico name="right" /></Tool>
            <Tool $w={24} aria-label="Merge"><Ico name="merge" /></Tool>
            <Drop w={24} />
          </ToolRow>
          <ToolRow>
            <Tool $w={26} aria-label="Decrease indent"><Ico name="outdent" /></Tool>
            <Tool $w={26} aria-label="Increase indent"><Ico name="indent" /></Tool>
            <Rule $m={1} />
            <Tool $w={24} aria-label="Orientation"><Ico name="orient" /></Tool>
            <Drop w={8} />
          </ToolRow>
        </ToolColumn>
      </Group>
      <Group w={108} pad={8} label="Number" launcher>
        <ToolColumn>
          <ToolRow>
            <Picker w={91} value="General" label="Number format" />
          </ToolRow>
          <ToolRow>
            <Tool $w={24} aria-label="Accounting"><Ico name="money" /></Tool>
            <Drop w={12} />
            <Tool $w={34}><Glyph $size={18}>%</Glyph></Tool>
            <Tool $w={18} aria-label="Comma style"><Ico name="comma" /></Tool>
          </ToolRow>
          <ToolRow>
            <Tool $w={24} aria-label="Increase decimal"><Ico name="decInc" /></Tool>
            <Tool $w={26} aria-label="Decrease decimal"><Ico name="decDec" /></Tool>
          </ToolRow>
        </ToolColumn>
      </Group>
      <Group w={183} pad={11} label="Styles">
        <ToolColumn>
          <LabelTool><Ico name="conditional" /><span>Conditional Formatting</span><Chevron /></LabelTool>
          <LabelTool><Ico name="tableFormat" /><span>Format as Table</span><Chevron /></LabelTool>
          <LabelTool><Ico name="cellStyle" /><span>Cell Styles</span><Chevron /></LabelTool>
        </ToolColumn>
      </Group>
      <Group w={106} pad={12} label="Cells">
        <ToolColumn>
          <LabelTool $min={42}><Ico name="insertCell" /><span>Insert</span><Chevron /></LabelTool>
          <LabelTool $min={45}><Ico name="deleteCell" /><span>Delete</span><Chevron /></LabelTool>
          <LabelTool><Ico name="formatCell" /><span>Format</span><Chevron /></LabelTool>
        </ToolColumn>
      </Group>
      <Group w={105} pad={8} label="Editing">
        <ToolColumn>
          <ToolRow>
            <Tool $w={24} aria-label="AutoSum"><Ico name="sum" /></Tool>
            <Drop w={22} />
            <Tool $w={30} aria-label="Sort and filter"><Ico name="sort" /></Tool>
            <Drop w={6} />
          </ToolRow>
          <ToolRow>
            <Tool $w={24} aria-label="Fill"><Ico name="fill" /></Tool>
            <Drop w={8} />
            <Tool $w={30} $ml={14} aria-label="Find"><Ico name="search" w={16} /></Tool>
            <Drop w={6} />
          </ToolRow>
          <ToolRow>
            <Tool $w={24} aria-label="Clear"><Ico name="eraser" /></Tool>
            <Drop w={8} />
          </ToolRow>
        </ToolColumn>
      </Group>
      <Group w={74} label="Sensitivity">
        <BigTool $w={72} $off>
          <Ico name="sensitivity" />
          <span>Sensitivity</span>
          <Chevron color="#b4b4b4" />
        </BigTool>
      </Group>
      <Group w={63} label="Add-ins">
        <BigTool $w={60}>
          <Ico name="addins" />
          <span>Add-ins</span>
        </BigTool>
      </Group>
      <Group w={62} label="">
        <BigTool $w={60}>
          <Ico name="analyze" />
          <span>Analyze Data</span>
        </BigTool>
      </Group>
      <CollapseButton aria-label="Collapse ribbon"><Chevron w={10} /></CollapseButton>
    </Ribbon>
  );
}

function Excel() {
  return (
    <ExcelWindow>
      <TitleBar $h={49} $pad={16}>
        <ExcelLogo />
        <AutoSaveToggle />
        <QuickTool $w={16} aria-label="Save"><Ico name="save" color="#9b3fb0" fill="#d9a5e3" /></QuickTool>
        <QuickTool $w={26} $ml={8} aria-label="Undo"><Ico name="undo" /></QuickTool>
        <QuickTool $w={6} aria-label="Undo list"><Chevron /></QuickTool>
        <QuickTool $w={26} $ml={8} aria-label="Redo"><Ico name="redo" color="#a8a8a8" /></QuickTool>
        <QuickTool $w={6} aria-label="Redo list"><Chevron color="#a8a8a8" /></QuickTool>
        <QuickTool $w={38} aria-label="Customise"><Ico name="customise" /></QuickTool>
        <DocTitle $ml={10} $w={147}>
          Run Sheet NEW
          <Chevron w={10} />
        </DocTitle>
        <SearchBox>
          <Ico name="search" color="#616161" />
          <input placeholder="Search" aria-label="Search" />
        </SearchBox>
        <Spacer />
        <Avatar>JC</Avatar>
        <WindowButton aria-label="Minimise"><Svg w={10} h={10}><path d="M0 5h10" /></Svg></WindowButton>
        <WindowButton aria-label="Maximise"><Svg w={10} h={10}><path d="M.5.5h9v9h-9z" /></Svg></WindowButton>
        <WindowButton $last aria-label="Close"><Svg w={10} h={10}><path d="m0 0 10 10M10 0 0 10" /></Svg></WindowButton>
      </TitleBar>
      <TabBar>
        {excelTabs.map(([name, w]) => (
          <Tab key={name} href="#" $w={w} $accent={name === 'Home' && '#107c41'}>
            <span>{name}</span>
          </Tab>
        ))}
        <Spacer />
        <ActionButton $w={90}>
          <Svg w={12} h={11}><path d="M.5.5h11v8H5L2.500 10.500v-2h-2z" /></Svg>
          Comments
        </ActionButton>
        <ActionButton $w={71} $green>
          <Svg w={12} h={12} color="#fff"><path d="M5 4H.5v7.500h9V8M3 8c1-3 3-4 5-4V1.500L11.500 5 8 8.500V6" /></Svg>
          Share
          <Chevron color="#fff" />
        </ActionButton>
      </TabBar>
      <ExcelRibbon />
      <FormulaBar>
        <NameBox>
          <input aria-label="Name box" defaultValue="B3257" />
          <Chevron w={10} />
        </NameBox>
        <Dots>⋮</Dots>
        <FxBox>
          <Svg w={12} h={12} color="#b4b4b4"><path d="m0 0 12 12M12 0 0 12" /></Svg>
          <Svg w={14} h={10} color="#b4b4b4"><path d="m0 5 5 5 9-10" /></Svg>
          fx
          <Chevron w={10} color="#999" />
        </FxBox>
        <FormulaBox>
          <input aria-label="Formula" defaultValue="692947" />
          <Chevron w={10} />
        </FormulaBox>
      </FormulaBar>
      <SheetArea>
        <GridView>
          <SheetTable />
        </GridView>
        <VScroll>
          <Svg w={9} h={7}><path d="M0 7h9L4.500 0z" fill="#616161" stroke="none" /></Svg>
          <VThumb />
          <Spacer />
          <Svg w={9} h={7}><path d="M0 0h9L4.500 7z" fill="#616161" stroke="none" /></Svg>
        </VScroll>
      </SheetArea>
      <SheetBar>
        <SheetNav aria-label="Previous sheet"><Svg w={32} h={10}><path d="M34 0l-5 5 5 5" strokeWidth="1.500" /></Svg></SheetNav>
        <SheetNav aria-label="Next sheet"><Svg w={32} h={10} color="#999"><path d="M29 0l5 5-5 5" strokeWidth="1.500" /></Svg></SheetNav>
        <SheetNav aria-label="More sheets"><Svg w={32} h={4}><path d="M26 1h3v3h-3zM30 1h3v3h-3zM34 1h3v3h-3z" fill="#333" stroke="none" /></Svg></SheetNav>
        <SheetTab><span>April 2025</span></SheetTab>
        <AddSheet aria-label="New sheet"><Svg w={11} h={11}><path d="M0 5.500h11M5.500 0v11" /></Svg></AddSheet>
        <Spacer />
        <Dots $mr={6}>⋮</Dots>
        <HScroll>
          <Svg w={7} h={9}><path d="M7 0v9L0 4.500z" fill="#616161" stroke="none" /></Svg>
          <HThumb />
          <Svg w={7} h={9}><path d="M0 0v9l7-4.500z" fill="#616161" stroke="none" /></Svg>
        </HScroll>
      </SheetBar>
      <StatusBar $pad={12}>
        <StatusItem $w={50}>Ready</StatusItem>
        <StatusItem $w={160} $bold><Ico name="access" />Accessibility: Investigate</StatusItem>
        <Spacer />
        <StatusItem $w={99}>Average: 692947</StatusItem>
        <StatusItem $w={66}>Count: 10</StatusItem>
        <StatusItem $w={89}>Sum: 6929470</StatusItem>
        <ViewButton $on aria-label="Normal"><Ico name="gridView" /></ViewButton>
        <ViewButton aria-label="Page layout"><Ico name="pageView" /></ViewButton>
        <ViewButton aria-label="Page break preview"><Ico name="breakView" /></ViewButton>
        <Svg w={14} h={9}><path d="M6 4.500h8" /></Svg>
        <Zoom type="range" aria-label="Zoom" min="0" max="100" defaultValue="53" />
        <Svg w={20} h={9}><path d="M0 4.500h9M4.500 0v9" /></Svg>
        <StatusItem $w={48}>115%</StatusItem>
      </StatusBar>
    </ExcelWindow>
  );
}

/* ---------- taskbar ---------- */

const Taskbar = styled.footer`
  position: relative;
  display: flex;
  align-items: center;
  height: 48px;
  padding: 0 24px 0 21px;
  background: #202020;
  color: #e8e8e8;
`;

const TaskSearch = styled.label`
  display: flex;
  align-items: center;
  gap: 11px;
  width: 220px;
  height: 33px;
  margin: 0 4px 0 14px;
  padding-left: 12px;
  border-top: 1px solid #595959;
  border-radius: 17px;
  background: #414141;
  font-size: 12px;

  input {
    width: 120px;
  }

  input::placeholder {
    color: #d0d0d0;
    opacity: 1;
  }
`;

const TaskButton = styled.button`
  position: relative;
  display: flex;
  align-items: center;
  justify-content: center;
  width: 40px;
  height: 40px;
  margin-right: 4px;
  border-radius: 4px;
  background: ${(p) => (p.$active ? '#303030' : 'none')};

  &::after {
    content: '';
    position: absolute;
    bottom: 1px;
    display: ${(p) => (p.$running ? 'block' : 'none')};
    width: ${(p) => (p.$active ? 16 : 6)}px;
    height: 3px;
    border-radius: 2px;
    background: ${(p) => (p.$active ? '#13a10e' : '#9a9a9a')};
  }
`;

const Clock = styled.time`
  line-height: 17px;
  text-align: right;
  white-space: pre-line;
`;

const taskApps = [
  {
    name: 'File Explorer',
    art: (
      <>
        <path d="M0 1h9l2 3h-3v4H0z" fill="#d99a14" />
        <path d="M0 5h9l2-2h13v19H0z" fill="#ffd75e" />
        <path d="M4 22v-5q0-2 2-2h12q2 0 2 2v5z" fill="#1f7fd4" />
        <path d="M8 18.500h8" stroke="#0d4f94" strokeWidth="1.500" />
      </>
    ),
  },
  {
    name: 'Chrome',
    running: true,
    art: (
      <>
        <circle cx="12" cy="12" r="12" fill="#fbc116" />
        <path d="M12 12 1.600 6A12 12 0 0 1 22.400 6z" fill="#ea4335" />
        <path d="M12 12 1.600 6A12 12 0 0 0 12 24l5-9z" fill="#34a853" />
        <circle cx="12" cy="12" r="6" fill="#fff" />
        <circle cx="12" cy="12" r="4.600" fill="#4285f4" />
      </>
    ),
  },
  {
    name: 'Outlook',
    running: true,
    art: (
      <>
        <path d="m4 7 10-6 10 6v14q0 2-2 2H6q-2 0-2-2z" fill="#1a8ce0" />
        <path d="M24 7v3l-11 7-4-3z" fill="#0f4fa0" />
        <path d="m5 23 19-13v11q0 2-2 2z" fill="#50d9ff" />
        <rect x="0" y="5.500" width="13" height="13" rx="1.500" fill="#0f6cbd" />
        <text x="6.500" y="15.600" fontSize="10" fontWeight="700" textAnchor="middle" fill="#fff">O</text>
      </>
    ),
  },
  { name: 'Word', running: true, logo: <WordLogo size={24} /> },
  { name: 'Excel', running: true, active: true, logo: <ExcelLogo size={24} /> },
  {
    name: 'Notepad',
    running: true,
    art: (
      <>
        <path d="M3 2h18v19H3z" fill="#45c3e6" />
        <path d="M3 21h18v2.500H3z" fill="#c46a2c" />
        <path d="M3 20.800h18" stroke="#fff" strokeWidth="1" />
        <path d="M5 0v4M8 0v4M11 0v4M14 0v4M17 0v4M20 0v4" stroke="#1b86a8" strokeWidth="1.200" />
        <path d="M6 7h12M6 11h12M6 15h12" stroke="#0f6f94" strokeWidth="1.600" />
      </>
    ),
  },
  {
    name: 'Services',
    running: true,
    art: (
      <>
        <circle cx="10" cy="9" r="6.500" fill="none" stroke="#cfe6f5" strokeWidth="2.500" />
        <circle cx="10" cy="9" r="8.500" fill="none" stroke="#cfe6f5" strokeWidth="2" strokeDasharray="3 2.600" />
        <circle cx="19" cy="18" r="3" fill="none" stroke="#b4d8ee" strokeWidth="1.800" />
        <circle cx="19" cy="18" r="4.200" fill="none" stroke="#b4d8ee" strokeWidth="1.500" strokeDasharray="2 1.800" />
      </>
    ),
  },
  {
    name: 'Teams',
    running: true,
    art: (
      <>
        <circle cx="12" cy="4" r="3.500" fill="#7b83eb" />
        <path d="M8 9h13q2 0 2 2v5a6 6 0 0 1-6 6h-4q-5 0-5-5z" fill="#7b83eb" />
        <path d="M8 9h9v9a5 5 0 0 1-8 4z" fill="#5b62d4" />
        <rect x="0" y="5.500" width="12" height="13" rx="1.500" fill="#4b53bc" />
        <text x="6" y="15.500" fontSize="10" fontWeight="700" textAnchor="middle" fill="#fff">T</text>
        <circle cx="21" cy="3" r="7" fill="#13a10e" />
        <path d="m18 3 2.200 2.500L24 1" fill="none" stroke="#0a3d08" strokeWidth="1.300" />
      </>
    ),
  },
  {
    name: 'Monitor',
    running: true,
    art: (
      <>
        <rect x="2" y="2" width="20" height="20" fill="#d9d9d9" />
        <g fill="#eef3f7" stroke="#8c96a0" strokeWidth="1">
          <circle cx="12" cy="8.500" r="5" />
          <circle cx="7" cy="17.500" r="3.500" />
          <circle cx="17" cy="17.500" r="3.500" />
        </g>
        <path d="m10 6 3 3M6 18l2-1M16 17l2 1" stroke="#4a6a8a" strokeWidth="1.400" />
      </>
    ),
  },
  {
    name: 'Paragon',
    running: true,
    art: (
      <>
        <path d="M0 7h5l-5 5z" fill="#d8401a" />
        <path d="M3 8h15q6 0 6 4t-6 4h-7v8H7V12h11v-1H3z" fill="#0b3fd0" />
        <path d="M1 12h4v12H1z" fill="#0a2fb8" />
      </>
    ),
  },
  {
    name: 'GoTo',
    running: true,
    art: (
      <>
        <rect x="2" y="2" width="20" height="20" rx="4" fill="#3b0a8f" />
        <path d="M16 7h-5.500Q8 7 8 9.500v2Q8 14.500 10.500 14.500H15v-4h-3M15 13l2 5" fill="none" stroke="#fff" strokeWidth="2" />
        <path d="M5 5h2M18 4v2M5 17h2M8 19l2-2" stroke="#e5a8ff" />
      </>
    ),
  },
];

function TaskBar() {
  return (
    <Taskbar>
      <button aria-label="Start">
        <Svg w={22} h={22}>
          <path d="M0 0h10.500v10.500H0zM11.500 0H22v10.500H11.500zM0 11.500h10.500V22H0zM11.500 11.500H22V22H11.500z" fill="#3cc0fb" stroke="none" />
        </Svg>
      </button>
      <TaskSearch>
        <Svg w={15} h={15} color="#e0e0e0">
          <circle cx="6.500" cy="6.500" r="5.500" strokeWidth="1.800" />
          <path d="m10.500 10.500 4 4" strokeWidth="1.800" />
        </Svg>
        <input placeholder="Search" aria-label="Search Windows" />
      </TaskSearch>
      {taskApps.map((app) => (
        <TaskButton key={app.name} aria-label={app.name} $running={app.running} $active={app.active}>
          {app.logo || (
            <svg width="24" height="24" viewBox="0 0 24 24">
              {app.art}
            </svg>
          )}
        </TaskButton>
      ))}
      <Spacer />
      <Clock>{'07:39:20\n30/04/2025'}</Clock>
    </Taskbar>
  );
}

function App() {
  return (
    <>
      <GlobalStyle />
      <Desktop>
        <BackgroundWord />
        <WordShadow />
        <Word />
        <ExcelShadow />
        <Excel />
        <TaskBar />
      </Desktop>
    </>
  );
}

export default App;
